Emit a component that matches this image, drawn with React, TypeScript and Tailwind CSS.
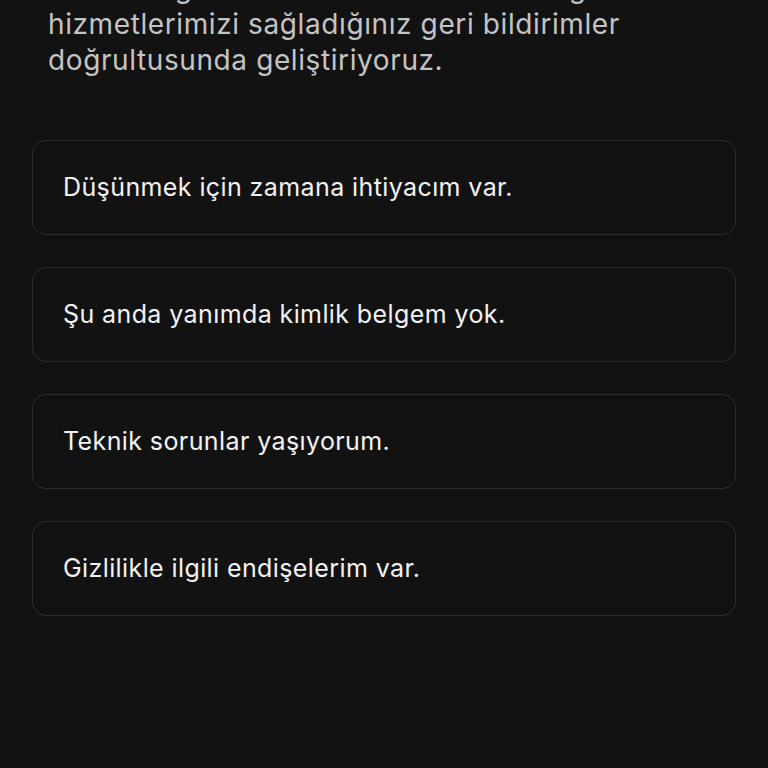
import React from "react";

const reasons = [
  "Düşünmek için zamana ihtiyacım var.",
  "Şu anda yanımda kimlik belgem yok.",
  "Teknik sorunlar yaşıyorum.",
  "Gizlilikle ilgili endişelerim var.",
];

export default function App() {
  return (
    <div
      className="h-screen w-full overflow-hidden bg-[#121212]"
      style={{ fontFamily: "Inter, 'Noto Sans', sans-serif" }}
    >
      {/* intro text, scrolled so the first line is mostly off screen */}
      <p className="mt-[-30px] px-12 text-[28px] leading-[36px] tracking-[0.6px] text-[#c4c4c4]">
        Kimlik doğrulama sürecimizi ve sunduğumuz hizmetlerimizi sağladığınız geri bildirimler doğrultusunda geliştiriyoruz.
      </p>

      <div className="mt-[62px] flex flex-col gap-8 px-8">
        {reasons.map((r) => (
          <button
            key={r}
            className="flex h-[95px] w-full items-center rounded-[14px] border border-[#2e2e2e] bg-[#121212] px-[30px] text-left text-[25px] tracking-[0.4px] text-[#f2f2f2]"
          >
            {r}
          </button>
        ))}
      </div>
    </div>
  );
}
